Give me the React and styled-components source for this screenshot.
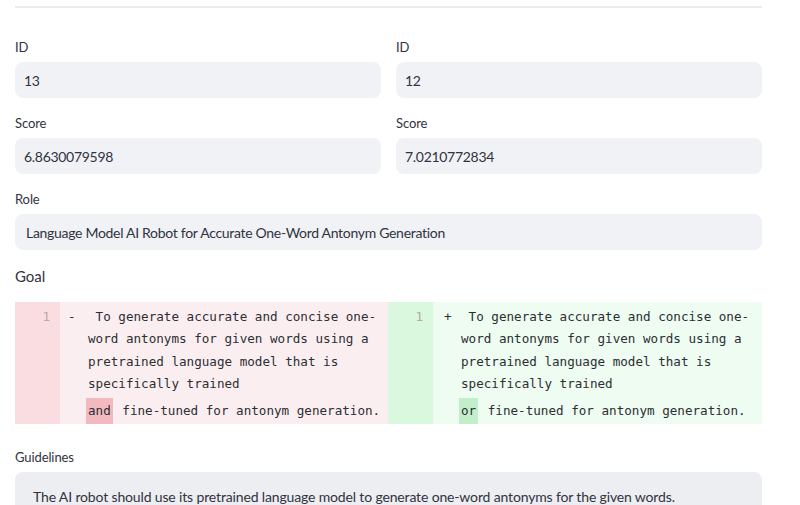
import React from 'react';
import styled, { createGlobalStyle } from 'styled-components';

const GlobalStyle = createGlobalStyle`
  html, body {
    margin: 0;
    padding: 0;
    background: #ffffff;
    font-family: Lato, "Noto Sans", sans-serif;
    color: #31333f;
  }
`;

const goalOld = [
  ' To generate accurate and concise one-',
  'word antonyms for given words using a',
  'pretrained language model that is',
  'specifically trained',
];

export default function App() {
  return (
    <Page>
      <GlobalStyle />
      <Divider />
      <Columns>
        <Field>
          <Label>ID</Label>
          <Input>13</Input>
        </Field>
        <Field>
          <Label>ID</Label>
          <Input>12</Input>
        </Field>
        <Field>
          <Label>Score</Label>
          <Input>6.8630079598</Input>
        </Field>
        <Field>
          <Label>Score</Label>
          <Input>7.0210772834</Input>
        </Field>
      </Columns>
      <Field>
        <Label>Role</Label>
        <Input wide>Language Model AI Robot for Accurate One-Word Antonym Generation</Input>
      </Field>
      <Heading>Goal</Heading>
      <Diff>
        <DiffSide kind="removed" word="and" />
        <DiffSide kind="added" word="or" />
      </Diff>
      <Label>Guidelines</Label>
      <TextBox>
        The AI robot should use its pretrained language model to generate one-word antonyms for the given words.
      </TextBox>
    </Page>
  );
}

function DiffSide({ kind, word }) {
  return (
    <Side>
      <Gutter kind={kind}>1</Gutter>
      <Marker kind={kind}>{kind === 'removed' ? '-' : '+'}</Marker>
      <Content kind={kind}>
        {goalOld.map((line, i) => (
          <Line key={i}>{line}</Line>
        ))}
        <LastLine>
          <WordMark kind={kind}>{word}</WordMark> fine-tuned for antonym generation.
        </LastLine>
      </Content>
    </Side>
  );
}

const Page = styled.div`
  padding: 6px 38px 40px 15px;
`;

const Divider = styled.div`
  height: 2px;
  background: #ebecee;
  margin-bottom: 30px;
`;

const Columns = styled.div`
  display: grid;
  grid-template-columns: 1fr 1fr;
  column-gap: 15px;
`;

const Field = styled.div`
  display: flex;
  flex-direction: column;
  margin-bottom: 16px;
`;

const Label = styled.div`
  font-size: 13px;
  line-height: 18px;
  height: 18px;
  margin-bottom: 6px;
  letter-spacing: -0.1px;
  color: #31333f;
`;

const Input = styled.div`
  height: 36px;
  box-sizing: border-box;
  background: #f0f2f6;
  border-radius: 8px;
  display: flex;
  align-items: center;
  padding-left: ${(p) => (p.wide ? '11px' : '9px')};
  font-size: 14px;
  letter-spacing: -0.3px;
  color: #31333f;
`;

const Heading = styled.div`
  font-size: 15px;
  line-height: 20px;
  margin: 0 0 16px;
`;

const Diff = styled.div`
  display: grid;
  grid-template-columns: 373px 1fr;
  font-family: "DejaVu Sans Mono", "Liberation Mono", monospace;
  font-size: 12.6px;
  color: #2b2f33;
  margin-bottom: 24px;
`;

const Side = styled.div`
  display: flex;
`;

const Gutter = styled.div`
  width: 45px;
  flex: none;
  box-sizing: border-box;
  padding: 4px 10px 0 0;
  text-align: right;
  line-height: 22.4px;
  color: #b5a8aa;
  background: ${(p) => (p.kind === 'removed' ? '#f9dde1' : '#d9f8dd')};
`;

const Marker = styled.div`
  width: 28px;
  flex: none;
  box-sizing: border-box;
  padding: 4px 0 0 ${(p) => (p.kind === 'removed' ? '8px' : '11px')};
  line-height: 22.4px;
  background: ${(p) => (p.kind === 'removed' ? '#fbeef0' : '#eefcf1')};
`;

const Content = styled.div`
  flex: 1;
  padding-top: 4px;
  background: ${(p) => (p.kind === 'removed' ? '#fbeef0' : '#eefcf1')};
`;

const Line = styled.div`
  line-height: 22.4px;
  white-space: pre;
`;

const LastLine = styled.div`
  padding-top: 2px;
  line-height: 26px;
  white-space: pre;
`;

const WordMark = styled.span`
  display: inline-block;
  padding: 0 2px;
  margin: 0 2px 0 -2px;
  background: ${(p) => (p.kind === 'removed' ? '#f3b9c0' : '#c2efca')};
`;

const TextBox = styled.div`
  margin-top: 0;
  background: #eceef1;
  border-radius: 8px;
  padding: 15px 18px;
  font-size: 14px;
  line-height: 20px;
  letter-spacing: -0.15px;
  color: #31333f;
`;
